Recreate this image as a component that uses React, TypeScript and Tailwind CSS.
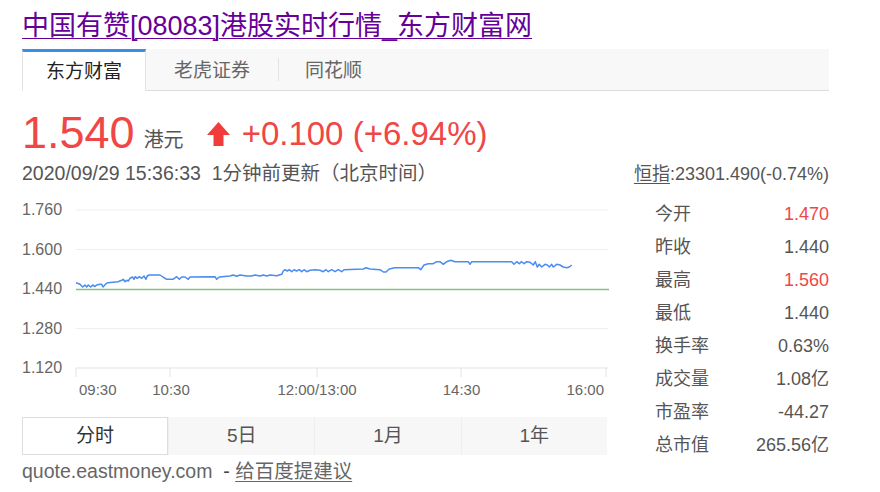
const font = "font-['Liberation_Sans','Noto_Sans_CJK_SC',sans-serif]";

// price line, page coordinates (chart svg is shifted by translate)
const linePts: [number, number][] = [
  [76, 281.7], [80, 283.3], [82.7, 286], [85, 284], [86.7, 286], [88.3, 284], [90.7, 286], [92.7, 284], [95, 285.5],
  [96.7, 284], [100, 283.3], [101.7, 283.3], [103, 286], [106, 282.7], [108, 281.7], [118, 280.7], [121.7, 279.3],
  [123.3, 278.3], [125, 280.7], [126.7, 279.3], [128.3, 280], [130, 277.3], [132.7, 276], [134, 278.3], [135.3, 275.7],
  [137.3, 277.3], [139.3, 275.7], [141.7, 277.3], [144, 275], [146, 278.3], [147.3, 275], [149, 274], [160, 274],
  [163, 276], [166.7, 278.3], [173, 278.3], [176.7, 275.7], [179.3, 278.3], [181.7, 276], [185, 276], [188.3, 278.3],
  [190, 276], [215, 275.7], [216.7, 278.3], [219.3, 276], [230, 275], [233.3, 274], [236.7, 275.3], [240, 274],
  [246.7, 275], [251.7, 275], [255, 274], [260, 275], [263.3, 274], [266.7, 275], [270, 274], [276.7, 274.7],
  [281.7, 273.3], [283.3, 270], [285, 268.7], [287.3, 270], [289.3, 268.7], [291.7, 270.7], [294, 268.7],
  [296.7, 270], [299.3, 268.7], [301.7, 270.7], [304, 268.7], [306.7, 270.7], [310, 269.3], [315, 268.7],
  [320, 269.3], [323.3, 270.7], [326, 268.7], [328.3, 270.7], [331.7, 268.7], [335, 270.7], [338.3, 268.7],
  [341.7, 270.7], [344, 268.7], [363.3, 268], [366, 266.7], [370, 268], [380, 268.7], [383.3, 271], [386, 271],
  [389.3, 268], [395, 266.7], [418.3, 266.7], [420.7, 268.7], [424, 264], [428.3, 262.7], [433.3, 262.7],
  [436.7, 260.7], [440, 260.7], [443.3, 263.3], [446.7, 260.7], [450.7, 259.3], [455, 260.7], [468.3, 260.7],
  [470, 263.3], [471.7, 260.7], [511.7, 260.7], [514, 263.3], [516.7, 260.7], [519.3, 262.7], [521.7, 260.7],
  [524, 262.7], [526.7, 260.7], [530, 261.3], [533.3, 264], [535.3, 260.7], [537.3, 266], [539.3, 263.3],
  [541.7, 266], [545, 263.3], [547.3, 264], [549.3, 266], [551.7, 263.3], [553.3, 266], [556.7, 263.3],
  [560, 264], [563.3, 266], [566.7, 266.7], [569.3, 266], [571.7, 264],
];

const grid = [
  { y: 209, label: "1.760" },
  { y: 248.5, label: "1.600" },
  { y: 288, label: "1.440" },
  { y: 327.5, label: "1.280" },
  { y: 367, label: "1.120" },
];

const ticks = [76, 170, 317, 461, 606];

function PriceChart() {
  return (
    <svg width="590" height="204" className="block overflow-visible">
      <g transform="translate(-22,-196)">
        {grid.map((g, i) => (
          <g key={g.label}>
            {i !== 2 && (
              <line x1="76" x2="608" y1={g.y} y2={g.y} stroke={i === 4 ? "#e3e3e3" : "#eeeeee"} strokeWidth="1" />
            )}
            <text x="22" y={g.y + 5} fontSize="16" fill="#666" fontFamily="Liberation Sans, sans-serif">
              {g.label}
            </text>
          </g>
        ))}
        {ticks.map((t) => (
          <line key={t} x1={t} x2={t} y1="367" y2="376" stroke="#e3e3e3" strokeWidth="1" />
        ))}
        <line x1="76" x2="609" y1="288.5" y2="288.5" stroke="#7bc87b" strokeWidth="1.5" />
        <polyline
          points={linePts.map((p) => p.join(",")).join(" ")}
          fill="none"
          stroke="#4a8cf0"
          strokeWidth="1.5"
          strokeLinejoin="round"
        />
        <g fontSize="15" fill="#666" fontFamily="Liberation Sans, sans-serif">
          <text x="79" y="394">09:30</text>
          <text x="171" y="394" textAnchor="middle">10:30</text>
          <text x="317" y="394" textAnchor="middle">12:00/13:00</text>
          <text x="461.5" y="394" textAnchor="middle">14:30</text>
          <text x="604" y="394" textAnchor="end">16:00</text>
        </g>
      </g>
    </svg>
  );
}

const stats = [
  { label: "今开", value: "1.470", red: true },
  { label: "昨收", value: "1.440" },
  { label: "最高", value: "1.560", red: true },
  { label: "最低", value: "1.440" },
  { label: "换手率", value: "0.63%" },
  { label: "成交量", value: "1.08亿" },
  { label: "市盈率", value: "-44.27" },
  { label: "总市值", value: "265.56亿" },
];

const ranges = ["分时", "5日", "1月", "1年"];

export default function App() {
  return (
    <div className={`${font} w-[880px] h-[492px] bg-white px-[22px] pt-[10px] overflow-hidden`}>
      <a href="#" className="block w-fit text-[27px] leading-[32px] text-[#660099] underline underline-offset-[3px] decoration-1">
        中国有赞[08083]港股实时行情_东方财富网
      </a>

      <div className="mt-[7px] flex h-[42px] w-[807px] border-b border-[#dddddd] bg-[#f8f8f8]">
        <div className="relative -mb-px flex h-[42px] items-center border-t-[3px] border-l border-r border-t-[#3a8ee6] border-l-[#e2e2e2] border-r-[#e2e2e2] bg-white px-[23px] pt-[2px] text-[19px] text-[#222]">
          东方财富
        </div>
        <div className="flex items-center px-[28px] pt-[3px] text-[19px] text-[#666]">老虎证券</div>
        <div className="my-[9px] w-px bg-[#e3e3e3]" />
        <div className="flex items-center px-[26px] pt-[3px] text-[19px] text-[#666]">同花顺</div>
      </div>

      <div className="mt-[19px] flex h-[45px] items-end text-[#f04646]">
        <span className="text-[45px] leading-[45px]">1.540</span>
        <span className="mb-[5px] ml-[9px] text-[20px] leading-[20px] text-[#555]">港元</span>
        <svg width="23" height="24" viewBox="0 0 23 24" className="mb-[9px] ml-[23px]">
          <polygon points="11.5,0 23,13 16.5,13 16.5,24 6.5,24 6.5,13 0,13" fill="#f23c3c" />
        </svg>
        <span className="mb-[5px] ml-[12px] text-[33px] leading-[33px]">+0.100 (+6.94%)</span>
      </div>

      <div className="mt-[6px] flex w-[807px] items-baseline justify-between leading-[24px] text-[#555]">
        <span className="whitespace-pre text-[19.5px]">2020/09/29 15:36:33  1分钟前更新（北京时间）</span>
        <span className="text-[18px]">
          <span className="underline underline-offset-[3px]">恒指</span>:23301.490(-0.74%)
        </span>
      </div>

      <div className="mt-[11px] flex">
        <div className="w-[585px]">
          <PriceChart />
          <div className="mt-[16px] flex h-[38px] w-[585px] bg-[#f7f7f7] text-[19px]">
            {ranges.map((r, i) => (
              <div
                key={r}
                className={
                  i === 0
                    ? "flex w-[146px] items-center justify-center border border-[#dddddd] bg-white text-[#333]"
                    : "flex flex-1 items-center justify-center border-l border-[#efefef] text-[#555]"
                }
              >
                {r}
              </div>
            ))}
          </div>
          <div className="mt-[4px] whitespace-pre text-[19.5px] leading-[24px] text-[#666]">
            quote.eastmoney.com  <span className="text-[#444]">- </span>
            <a href="#" className="underline underline-offset-[3px]">给百度提建议</a>
          </div>
        </div>

        <div className="ml-[48px] w-[174px] text-[18px]">
          {stats.map((s) => (
            <div key={s.label} className="flex h-[33px] items-center justify-between pt-[2px]">
              <span className="text-[#555]">{s.label}</span>
              <span className={s.red ? "text-[#f04646]" : "text-[#555]"}>{s.value}</span>
            </div>
          ))}
        </div>
      </div>
    </div>
  );
}
